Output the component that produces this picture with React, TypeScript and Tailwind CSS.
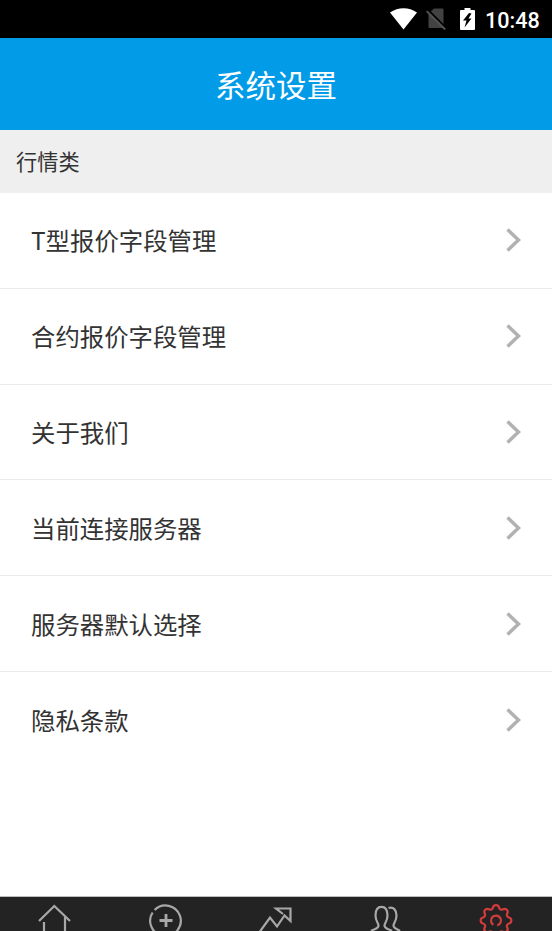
import React from 'react';

const rows = [
  'T型报价字段管理',
  '合约报价字段管理',
  '关于我们',
  '当前连接服务器',
  '服务器默认选择',
  '隐私条款',
];

function StatusBar() {
  return (
    <div className="flex h-[38px] shrink-0 items-center justify-end bg-black pr-3 text-white">
      <svg className="h-[22px] w-[27px]" viewBox="0 0 27 22" fill="currentColor">
        <path d="M0 4.5C8-1.3 19-1.3 27 4.5L13.5 21.5Z" />
      </svg>
      <svg className="ml-[9px] h-[22px] w-5" viewBox="0 0 20 22">
        <path d="M8 0.500h8.500a1 1 0 0 1 1 1V20H3.500a1 1 0 0 1-1-1V5.500Z" fill="#424242" />
        <path d="M1.500 1.500 20 20" stroke="#000" strokeWidth="2" />
        <path d="M0.700 3.200 19.200 21.500" stroke="#555" strokeWidth="1.800" />
      </svg>
      <svg className="ml-3.5 h-[22px] w-[15px]" viewBox="0 0 15 22">
        <path d="M1 2h3.500V0h6v2H14a1 1 0 0 1 1 1v18a1 1 0 0 1-1 1H1a1 1 0 0 1-1-1V3a1 1 0 0 1 1-1Z" fill="currentColor" />
        <path d="M9 5 3 12.500H6.500L4.500 19.500 11.500 10.500H8.500L11.500 5.500Z" fill="#000" />
      </svg>
      <span className="ml-[10px] w-[55px] whitespace-nowrap pt-[3px] font-['Roboto',sans-serif] text-[21.6px] font-medium leading-none">
        10:48
      </span>
    </div>
  );
}

function SettingRow({ label, last }: { label: string; last: boolean }) {
  return (
    <li
      className={`flex h-[95.8px] items-center justify-between pl-[31px] pr-[31px] ${
        last ? '' : 'border-b-[1.5px] border-[#ebebeb]'
      }`}
    >
      <span className="text-[24.4px] leading-9">{label}</span>
      <svg className="h-6 w-4" viewBox="0 0 16 24" fill="none" stroke="#b2b2b2" strokeWidth="3.500">
        <path d="M2.500 1.500 13.500 12 2.500 22.500" />
      </svg>
    </li>
  );
}

function HomeIcon() {
  return (
    <>
      <path d="M2 24 17.300 9 33 24" />
      <path d="M7 25v12M28 20v17" />
    </>
  );
}

function AddIcon() {
  return (
    <>
      <path d="M4.600 15.500A15.300 15.300 0 1 0 6.600 13" />
      <path d="M18 17v13M11.500 23.500h13" strokeWidth="2.800" />
    </>
  );
}

function TrendIcon() {
  return <path d="M2 34.500 12 20.500 19 29.500 26.500 18.500 32.500 24V11.500H18L25 17" />;
}

function PeopleIcon() {
  return (
    <>
      <path d="M3 34c3-2 7.500-2 7.500-5.500C10.500 26 7.500 24 7.500 18.500 7.500 13 9.500 9.800 13.500 9.800S19.500 13 19.500 18.500C19.500 24 16.500 26 16.500 28.500 16.500 32 21 32 24 34" />
      <path d="M20.500 11C25.500 9.500 28.500 13 28.500 18.500 28.500 24 25.500 26 25.500 28.500 25.500 31.500 29 32 32 34" />
    </>
  );
}

function GearIcon() {
  return (
    <g transform="translate(17 23.500)">
      <path
        d="M-3-13A3.100 3.100 0 0 1 3-13A2.700 2.700 0 0 0 7.100-11.300A3.100 3.100 0 0 1 11.300-7.100A2.700 2.700 0 0 0 13-3A3.100 3.100 0 0 1 13 3A2.700 2.700 0 0 0 11.300 7.100A3.100 3.100 0 0 1 7.100 11.300A2.700 2.700 0 0 0 3 13A3.100 3.100 0 0 1-3 13A2.700 2.700 0 0 0-7.100 11.300A3.100 3.100 0 0 1-11.300 7.100A2.700 2.700 0 0 0-13 3A3.100 3.100 0 0 1-13-3A2.700 2.700 0 0 0-11.300-7.100A3.100 3.100 0 0 1-7.100-11.300A2.700 2.700 0 0 0-3-13Z"
      />
      <path d="M-2.600 4.300A5 5 0 1 1 1.200 4.900" />
    </g>
  );
}

const tabs = [HomeIcon, AddIcon, TrendIcon, PeopleIcon, GearIcon];

export default function App() {
  return (
    <div className="flex h-[931px] w-full flex-col overflow-hidden bg-white font-['Noto_Sans_CJK_SC',sans-serif] text-[#333333]">
      <StatusBar />
      <header className="flex h-[92px] shrink-0 items-center justify-center bg-[#029be7] text-[30.5px] text-white">
        <h1 className="leading-none">系统设置</h1>
      </header>
      <h2 className="flex h-[63px] shrink-0 items-center bg-[#efefef] pb-0.5 pl-4 text-[21.2px]">行情类</h2>
      <ul className="grow">
        {rows.map((label, i) => (
          <SettingRow key={label} label={label} last={i === rows.length - 1} />
        ))}
      </ul>
      <nav className="grid h-[35px] shrink-0 grid-cols-5 border-t border-[#bdbdbd] bg-[#232323]">
        {tabs.map((Icon, i) => (
          <div key={i} className="flex justify-center">
            <svg
              className={`h-[34px] w-9 ${i === 4 ? 'text-[#d43c3c]' : 'text-[#a8a8a8]'}`}
              viewBox="0 0 36 34"
              fill="none"
              stroke="currentColor"
              strokeWidth="2.200"
            >
              <Icon />
            </svg>
          </div>
        ))}
      </nav>
    </div>
  );
}
